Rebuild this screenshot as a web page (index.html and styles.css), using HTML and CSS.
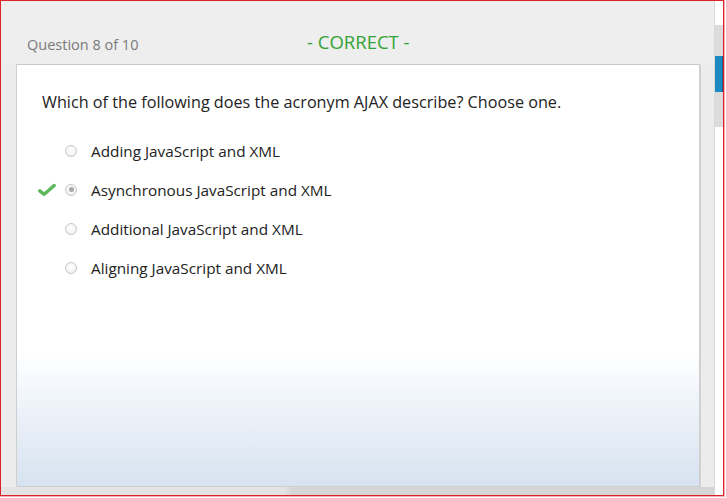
FILE: index.html
```html
<!DOCTYPE html>
<html>
<head>
<meta charset="utf-8">
<link rel="stylesheet" href="styles.css">
</head>
<body>
<div class="frame">
  <div class="panel">
    <div class="header">
      <div class="qnum">Question 8 of 10</div>
      <div class="status">- CORRECT -</div>
    </div>
    <div class="card">
      <div class="question">Which of the following does the acronym AJAX describe? Choose one.</div>
      <ul class="options">
        <li class="option"><span class="mark"></span><span class="radio"></span><span class="label">Adding JavaScript and XML</span></li>
        <li class="option"><span class="mark"><svg width="18" height="14" viewBox="0 0 18 14"><path d="M1.8 7.8 L6.2 11.3 L16.2 2.5" fill="none" stroke="#5cb85c" stroke-width="3.4" stroke-linecap="round" stroke-linejoin="round"/></svg></span><span class="radio selected"></span><span class="label">Asynchronous JavaScript and XML</span></li>
        <li class="option"><span class="mark"></span><span class="radio"></span><span class="label">Additional JavaScript and XML</span></li>
        <li class="option"><span class="mark"></span><span class="radio"></span><span class="label">Aligning JavaScript and XML</span></li>
      </ul>
    </div>
    <div class="footer"></div>
  </div>
  <div class="scrollbar">
    <div class="sb-top"></div>
    <div class="sb-track"><div class="sb-thumb"></div></div>
  </div>
</div>
</body>
</html>
```
FILE: styles.css
```css
html, body {
  margin: 0;
  padding: 0;
  background: #ffffff;
}
body {
  font-family: "Open Sans", "Noto Sans", sans-serif;
  width: 726px;
  height: 498px;
  overflow: hidden;
}
.frame {
  width: 722px;
  height: 494px;
  border: 1px solid #e0202a;
  box-shadow: 0 0 0 1px #f4b0b0;
  margin: 0;
  display: flex;
  background: #ffffff;
}
.panel {
  width: 714px;
  height: 494px;
  background: #ececec;
  display: flex;
  flex-direction: column;
  box-sizing: border-box;
  padding: 1px 0 0 15px;
  border-right: 1px solid #d8d8d8;
}
.header {
  height: 62px;
  display: flex;
  align-items: flex-end;
  background: #eeeeee;
  margin-left: -15px;
  padding-left: 15px;
}
.qnum {
  font-size: 14.5px;
  color: #7a7a7a;
  margin: 0 0 10px 11px;
  width: 280px;
}
.status {
  font-size: 18.5px;
  color: #35a235;
  margin-bottom: 10px;
}
.card {
  width: 684px;
  height: 423px;
  box-sizing: border-box;
  border: 1px solid #cfcfcf;
  border-top-color: #c8c8c8;
  background: linear-gradient(to bottom, #ffffff 0%, #ffffff 68%, #f3f7fc 77%, #e3ebf5 90%, #d6e3f0 100%);
  padding: 26px 0 0 25px;
  box-shadow: 1px 1px 0 #d2d2d2;
}
.question {
  font-size: 16.2px;
  color: #222222;
  line-height: 22px;
}
.options {
  list-style: none;
  margin: 18px 0 0 0;
  padding: 0;
}
.option {
  display: flex;
  align-items: center;
  height: 39px;
  margin-left: -4px;
}
.mark {
  width: 18px;
  height: 14px;
  display: inline-flex;
  margin-right: 9px;
}
.radio {
  width: 12px;
  height: 12px;
  border-radius: 50%;
  border: 1px solid #c8c8c8;
  background: radial-gradient(circle at 50% 40%, #ffffff 0%, #f4f4f4 60%, #e2e2e2 100%);
  box-sizing: border-box;
  position: relative;
  margin-right: 14px;
}
.radio.selected::after {
  content: "";
  position: absolute;
  left: 2.5px;
  top: 2.5px;
  width: 5px;
  height: 5px;
  border-radius: 50%;
  background: #a8a8a8;
}
.label {
  font-size: 15.3px;
  color: #222222;
}
.footer {
  height: 8px;
  margin-left: -15px;
  background: linear-gradient(to right, #e4e4e4 0, #e4e4e4 283px, #d6d6d6 292px, #d6d6d6 100%);
}
.scrollbar {
  width: 8px;
  display: flex;
  flex-direction: column;
}
.sb-top {
  height: 24px;
  background: #ffffff;
}
.sb-track {
  height: 102px;
  background: #dcdcdc;
  padding-top: 31px;
  box-sizing: border-box;
}
.sb-thumb {
  height: 36px;
  background: #1b8ac4;
  border-right: 1px solid #135f8a;
}
```
